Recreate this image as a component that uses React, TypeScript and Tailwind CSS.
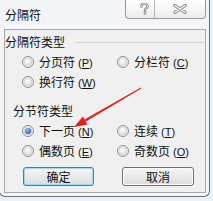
type Opt = { label: string; hot: string; checked?: boolean };

const cjk = { fontFamily: '"Noto Sans CJK SC", "Noto Sans", sans-serif' };

function Radio({ checked }: { checked?: boolean }) {
  return (
    <svg width="12" height="12" viewBox="0 0 12 12" className="shrink-0">
      <defs>
        <radialGradient id="rg" cx="0.4" cy="0.35" r="0.7">
          <stop offset="0" stopColor="#ffffff" />
          <stop offset="1" stopColor="#d8d8d8" />
        </radialGradient>
        <radialGradient id="rb" cx="0.4" cy="0.35" r="0.7">
          <stop offset="0" stopColor="#8fc3f0" />
          <stop offset="1" stopColor="#1d5fae" />
        </radialGradient>
      </defs>
      <circle cx="6" cy="6" r="5.5" fill="#f4f4f4" stroke="#8f8f8f" strokeWidth="1" />
      <circle cx="6" cy="6" r="4" fill="url(#rg)" stroke="#c9c9c9" strokeWidth="0.6" />
      {checked && <circle cx="6" cy="6" r="3" fill="url(#rb)" />}
    </svg>
  );
}

function Option({ label, hot, checked }: Opt) {
  return (
    <div className="flex h-[20px] items-center gap-[5px]">
      <Radio checked={checked} />
      <span className="text-[12px] leading-none text-[#111]" style={cjk}>
        {label}
        <span className="ml-[3px] text-[11px]" style={{ fontFamily: '"Liberation Sans", sans-serif' }}>
          (<span className="underline">{hot}</span>)
        </span>
      </span>
    </div>
  );
}

function Button({ text, focused }: { text: string; focused?: boolean }) {
  return (
    <div
      className={
        "flex h-[19px] items-center justify-center rounded-[3px] border bg-gradient-to-b from-[#f6f6f6] to-[#dcdcdc] text-[12px] text-[#111] " +
        (focused ? "w-[71px] border-[#3c7fb1] shadow-[inset_0_0_0_1px_#a6d8f3]" : "w-[72px] border-[#707070] shadow-[inset_0_0_0_1px_#fbfbfb]")
      }
      style={cjk}
    >
      {text}
    </div>
  );
}

export default function App() {
  return (
    <div className="relative h-[201px] w-[213px] overflow-hidden bg-[#e9f3fa]">
      <div className="-ml-px flex h-[197px] w-[211px] flex-col rounded-b-[6px] border border-t-0 border-[#6f6f6f] bg-[#f3f5f8]">
        {/* title bar */}
        <div className="flex h-[29px] items-start justify-between">
          <span className="pl-[5px] pt-[7px] text-[12px] leading-[16px] text-[#111]" style={cjk}>
            分隔符
          </span>
          <div className="mr-[3px] flex h-[19px] overflow-hidden rounded-b-[4px] border border-t-0 border-[#9a9a9a] bg-gradient-to-b from-[#ffffff] to-[#ececec]">
            <div className="flex w-[29px] items-center justify-center border-r border-[#b5b5b5] pl-[9px]">
              <svg width="9" height="12" viewBox="0 0 9 12">
                <path
                  d="M1.5 3.5 C1.5 1.6 3 0.8 4.5 0.8 C6.2 0.8 7.5 1.8 7.5 3.3 C7.5 5 5 5.4 5 7.2 M5 9.6 L5 10.4"
                  fill="none"
                  stroke="#8a8a8a"
                  strokeWidth="2.6"
                  strokeLinecap="round"
                />
                <path
                  d="M1.5 3.5 C1.5 1.6 3 0.8 4.5 0.8 C6.2 0.8 7.5 1.8 7.5 3.3 C7.5 5 5 5.4 5 7.2 M5 9.6 L5 10.4"
                  fill="none"
                  stroke="#ffffff"
                  strokeWidth="0.9"
                  strokeLinecap="round"
                />
              </svg>
            </div>
            <div className="flex w-[50px] items-center justify-center">
              <svg width="14" height="10" viewBox="0 0 14 10">
                <path d="M2 1.5 L12 8.5 M12 1.5 L2 8.5" stroke="#8a8a8a" strokeWidth="3.2" strokeLinecap="round" />
                <path d="M2 1.5 L12 8.5 M12 1.5 L2 8.5" stroke="#ffffff" strokeWidth="1.1" strokeLinecap="round" />
              </svg>
            </div>
          </div>
        </div>

        {/* client area */}
        <div className="ml-[4px] flex h-[164px] w-[202px] flex-col border border-[#a9a9a9] bg-[#f0f0f0]">
          <div className="mt-[4px] flex items-center">
            <span className="text-[12px] leading-[16px] text-[#111]" style={cjk}>
              分隔符类型
            </span>
            <div className="ml-[10px] mr-[1px] h-px flex-1 bg-[#d5d5d5]" />
          </div>
          <div className="mt-[2px] grid grid-cols-[95px_1fr] pl-[17px]">
            <Option label="分页符" hot="P" />
            <Option label="分栏符" hot="C" />
            <Option label="换行符" hot="W" />
          </div>
          <span className="mt-[11px] pl-[8px] text-[12px] leading-[16px] text-[#111]" style={cjk}>
            分节符类型
          </span>
          <div className="mt-[2px] grid grid-cols-[95px_1fr] pl-[17px]">
            <Option label="下一页" hot="N" checked />
            <Option label="连续" hot="T" />
            <Option label="偶数页" hot="E" />
            <Option label="奇数页" hot="O" />
          </div>
          <div className="ml-[18px] mt-[6px] flex gap-[28px]">
            <Button text="确定" focused />
            <Button text="取消" />
          </div>
        </div>
      </div>

      {/* annotation arrow */}
      <svg className="pointer-events-none absolute inset-0" width="213" height="201" viewBox="0 0 213 201">
        <polygon points="85.9,121.6 84.5,119.4 140.75,87.57 141.25,88.43" fill="#e3201e" />
        <polygon points="74,127 87.5,124.4 82.9,116.6" fill="#e3201e" />
      </svg>
    </div>
  );
}
